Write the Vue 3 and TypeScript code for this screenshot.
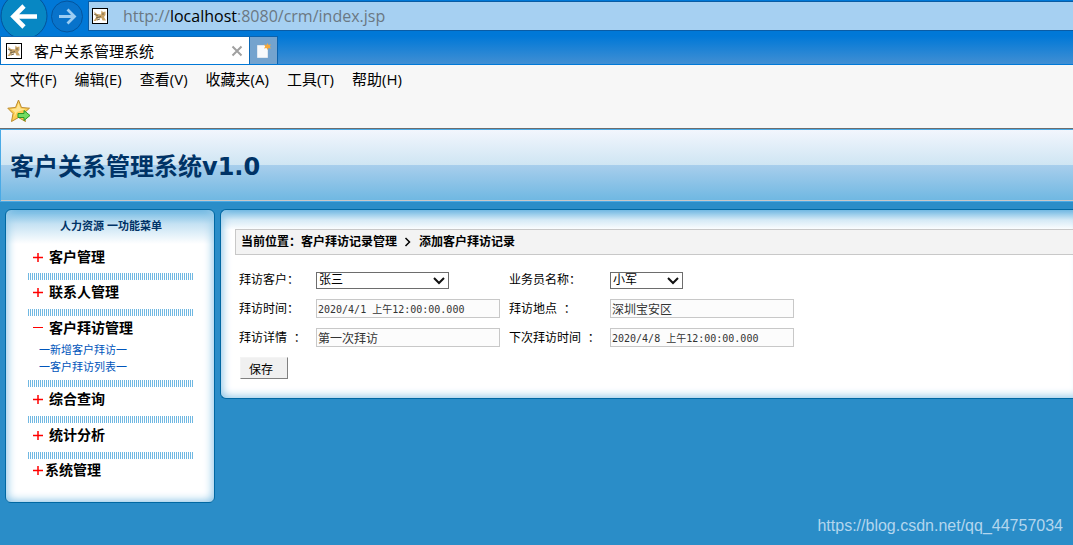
<script setup lang="ts">
import { ref } from 'vue'

interface MenuGroup {
  title: string
  open?: boolean
  tight?: boolean
  children?: string[]
}

const browserMenu: string[] = ['文件(F)', '编辑(E)', '查看(V)', '收藏夹(A)', '工具(T)', '帮助(H)']

const groups: MenuGroup[] = [
  { title: '客户管理' },
  { title: '联系人管理' },
  { title: '客户拜访管理', open: true, children: ['一新增客户拜访一', '一客户拜访列表一'] },
  { title: '综合查询' },
  { title: '统计分析' },
  { title: '系统管理', tight: true },
]

const customer = ref('张三')
const salesman = ref('小军')
const visitTime = ref('2020/4/1 上午12:00:00.000')
const place = ref('深圳宝安区')
const detail = ref('第一次拜访')
const nextTime = ref('2020/4/8 上午12:00:00.000')
</script>

<template>
  <div class="page">
    <header class="chrome">
      <div class="nav-row">
        <button class="nav-btn back" aria-label="后退">
          <svg width="48" height="36" viewBox="0 0 48 36">
            <circle cx="24" cy="16" r="23" fill="#0787c3" stroke="#04539a" stroke-width="1" />
            <path d="M14 16.500H37M24 6L13.500 16.500L24 27" fill="none" stroke="#fff" stroke-width="4.600" />
          </svg>
        </button>
        <button class="nav-btn forward" aria-label="前进">
          <svg width="34" height="36" viewBox="0 0 34 36">
            <circle cx="17" cy="16.500" r="15.500" fill="#0873cb" stroke="#04559f" stroke-width="1" />
            <path d="M9 16.500H24M17.500 9.500L24.500 16.500L17.500 23.500" fill="none" stroke="#9ccdf3" stroke-width="2.800" />
          </svg>
        </button>
        <div class="address">
          <svg class="favicon" width="16" height="16" viewBox="0 0 16 16">
            <rect x="0.500" y="0.500" width="15" height="15" fill="#fff" stroke="#000" />
            <path d="M2 3.500L5 6L9 6.500L9.500 2.500L11 4L13.500 3.500L13.500 7L12 9L14 12.500H10.500L9.500 10L6 10.500L4 13H1.500L4 9.500L3.500 7.500Z" fill="#c9a468" />
            <path d="M2 6L6 8M4 10L9 8.500M10 6H12M5 12L8 11" stroke="#75684e" stroke-width="1" />
          </svg>
          <span class="url">http://<b>localhost</b>:8080/crm/index.jsp</span>
        </div>
      </div>
      <div class="tab-row">
        <div class="tab">
          <svg class="favicon" width="16" height="16" viewBox="0 0 16 16">
            <rect x="0.500" y="0.500" width="15" height="15" fill="#fff" stroke="#000" />
            <path d="M2 3.500L5 6L9 6.500L9.500 2.500L11 4L13.500 3.500L13.500 7L12 9L14 12.500H10.500L9.500 10L6 10.500L4 13H1.500L4 9.500L3.500 7.500Z" fill="#c9a468" />
            <path d="M2 6L6 8M4 10L9 8.500M10 6H12M5 12L8 11" stroke="#75684e" stroke-width="1" />
          </svg>
          <span class="tab-title">客户关系管理系统</span>
          <button class="tab-close" aria-label="关闭标签页">
            <svg width="12" height="12" viewBox="0 0 12 12">
              <path d="M1.500 1.500L10.500 10.500M10.500 1.500L1.500 10.500" stroke="#a0a0a0" stroke-width="2" />
            </svg>
          </button>
        </div>
        <button class="new-tab" aria-label="新建标签页">
          <svg width="16" height="16" viewBox="0 0 16 16">
            <path d="M1.500 2.500H11.500V14.500H1.500Z" fill="#f8fafc" stroke="#e0e8f0" />
            <path d="M11.500 0L12.500 2L15 1.500L13.800 3.500L15 5.500L12.500 5L11.500 7L10.500 5L8 5.500L9.200 3.500L8 1.500L10.500 2Z" fill="#f5a93c" />
          </svg>
        </button>
      </div>
    </header>

    <nav class="menu-bar">
      <button v-for="m in browserMenu" :key="m">{{ m }}</button>
    </nav>
    <div class="favorites">
      <button aria-label="添加到收藏夹栏">
        <svg width="24" height="24" viewBox="0 0 24 24">
          <path d="M11.500 1L14.500 8.500L22.500 9.200L16.500 14.500L18.500 22.500L11.500 18.500L4.500 22.500L6 14.500L0.800 9.200L8.500 8.500Z" fill="#fbce50" stroke="#bd8a2c" />
          <path d="M11.500 4L13.500 9.500L19 10L10 13L7 18L8 13.500L4 10L9.500 9.500Z" fill="#ffe594" />
          <path d="M11 14.500H17V11.500L23 16.500L17 21.500V18.500H11Z" fill="#72dc62" stroke="#2b9628" />
        </svg>
      </button>
    </div>

    <div class="banner"><h1>客户关系管理系统v1.0</h1></div>

    <div class="body">
      <aside class="sidebar">
        <h2>人力资源 一功能菜单</h2>
        <ul class="groups">
          <li v-for="g in groups" :key="g.title">
            <a href="#" class="group" :class="{ tight: g.tight }">
              <svg width="10" height="10" viewBox="0 0 10 10">
                <path :d="g.open ? 'M0 4.500H10' : 'M0 5.500H10M5 1V10'" stroke="#f00" :stroke-width="g.open ? 1 : 1.5" />
              </svg>
              <span>{{ g.title }}</span>
            </a>
            <div v-if="g.children" class="children">
              <a v-for="c in g.children" :key="c" href="#">{{ c }}</a>
            </div>
          </li>
        </ul>
      </aside>

      <main class="panel">
        <div class="crumbs">
          <span>当前位置：客户拜访记录管理</span>
          <svg width="12" height="12" viewBox="0 0 12 12"><path d="M3.500 2L7.500 6L3.500 10" fill="none" stroke="#000" stroke-width="1.500" /></svg>
          <span>添加客户拜访记录</span>
        </div>
        <form class="form" @submit.prevent>
          <label for="customer">拜访客户：</label>
          <div class="select wide">
            <select id="customer" v-model="customer"><option>张三</option></select>
            <svg width="12" height="8" viewBox="0 0 12 8"><path d="M1 1L6 6L11 1" fill="none" stroke="#111" stroke-width="2" /></svg>
          </div>
          <label for="salesman">业务员名称：</label>
          <div class="select narrow">
            <select id="salesman" v-model="salesman"><option>小军</option></select>
            <svg width="12" height="8" viewBox="0 0 12 8"><path d="M1 1L6 6L11 1" fill="none" stroke="#111" stroke-width="2" /></svg>
          </div>

          <label for="visit-time">拜访时间：</label>
          <input id="visit-time" v-model="visitTime" class="date" type="text" />
          <label for="place">拜访地点&nbsp; ：</label>
          <input id="place" v-model="place" type="text" />

          <label for="detail">拜访详情&nbsp; ：</label>
          <input id="detail" v-model="detail" type="text" />
          <label for="next-time">下次拜访时间&nbsp; ：</label>
          <input id="next-time" v-model="nextTime" class="date" type="text" />

          <button class="save" type="submit">保存</button>
        </form>
      </main>
    </div>

    <footer>https://blog.csdn.net/qq_44757034</footer>
  </div>
</template>

<style>
body {
  margin: 0;
  background: #2a8dc8;
}
</style>

<style scoped>
.page {
  min-height: 100vh;
  display: flex;
  flex-direction: column;
  overflow-x: hidden;
  background: #2a8dc8;
  font-family: "Liberation Sans", "Noto Sans CJK SC", sans-serif;
  font-size: 12px;
  color: #000;
}
* {
  box-sizing: border-box;
}
button {
  margin: 0;
  padding: 0;
  border: 0;
  background: none;
  font: inherit;
  color: inherit;
}
svg {
  display: block;
  flex: none;
}
a {
  text-decoration: none;
}

.chrome {
  background: linear-gradient(#0078d7 36px, #418fd3 64px);
  border-bottom: 1px solid #0078d7;
  font-family: "Open Sans", "Noto Sans CJK SC", sans-serif;
}
.nav-row {
  display: flex;
  height: 36px;
}
.nav-btn.forward {
  margin: 0 4px 0 2px;
}
.address {
  flex: 1;
  height: 30px;
  margin-top: 1px;
  display: flex;
  align-items: center;
  gap: 15px;
  padding-left: 3px;
  background: #a6d0f2;
  border: 1px solid #0a5ca5;
  border-right: 0;
  font-size: 16px;
  color: #6b7883;
}
.url b {
  font-weight: 400;
  color: #000;
}
.tab-row {
  display: flex;
  height: 28px;
}
.tab {
  width: 250px;
  display: flex;
  align-items: center;
  padding: 0 6px 0 5px;
  background: #fff;
  border: 1px solid #0b69b7;
  border-bottom: 0;
}
.tab-title {
  flex: 1;
  margin-left: 12px;
  font-size: 15px;
  line-height: 26px;
}
.new-tab {
  width: 28px;
  display: flex;
  align-items: center;
  justify-content: center;
  background: #74a3ce;
  border: 1px solid #0b62ad;
  border-left: 0;
  border-bottom: 0;
}

.menu-bar {
  display: flex;
  gap: 18px;
  padding-left: 10px;
  background: #f7f7f7;
  font-family: "Open Sans", "Noto Sans CJK SC", sans-serif;
  font-size: 15px;
}
.menu-bar button {
  height: 28px;
  line-height: 26px;
}
.favorites {
  height: 36px;
  padding: 6px 7px;
  background: #f7f7f7;
  border-bottom: 1px solid #6d6d6d;
}

.banner {
  height: 73px;
  border: 1px solid #4aaae6;
  border-right: 0;
  padding-left: 9px;
  background: linear-gradient(#f2f6fd 0, #cfe5f3 35px, #a8ceec 35px, #70b8e2 70px, #c8c8c8 70px);
}
.banner h1 {
  margin: 0;
  font: bold 24px/75px "DejaVu Sans", "Noto Sans CJK SC", sans-serif;
  color: #036;
}

.body {
  display: flex;
  align-items: flex-start;
  gap: 5px;
  padding: 7px 0 0 5px;
}
.sidebar,
.panel {
  border: 1px solid #0068a3;
  background: linear-gradient(#70b8e2 0, #d5eaf6 10px, #fff 20px);
}
.sidebar {
  width: 210px;
  flex: none;
  border-radius: 6px;
  padding: 8px 20px 14px 22px;
  background: linear-gradient(#70b8e2 0, #c5e2f3 14px, #fff 34px);
  box-shadow: inset 8px 0 8px -6px #9accea, inset -8px 0 8px -6px #9accea, inset 0 -8px 8px -6px #9accea;
}
.sidebar h2 {
  margin: 0 0 12px;
  font-size: 11px;
  line-height: 16px;
  text-align: center;
  color: #036;
}
.groups {
  margin: 0;
  padding: 0;
  list-style: none;
}
.groups li + li::before {
  content: "";
  display: block;
  height: 7px;
  margin-right: 1px;
  background: repeating-linear-gradient(90deg, #70b8e2 0 1px, #fff 1px 2px);
}
.group {
  display: flex;
  align-items: center;
  gap: 6px;
  height: 29px;
  padding: 0 0 6px 5px;
  font-size: 14px;
  font-weight: bold;
  line-height: 24px;
  color: #000;
}
.groups li:first-child .group {
  height: 27px;
}
.group.tight {
  gap: 2px;
  padding-bottom: 8px;
}
.children {
  padding: 0 0 4px 11px;
  margin-top: -3px;
  font-size: 11px;
  line-height: 17px;
}
.children a {
  display: block;
  color: #05b;
}

.panel {
  flex: 1;
  min-width: 0;
  border-right: 0;
  border-radius: 6px 0 0 6px;
  padding: 19px 0 14px 14px;
  box-shadow: inset 8px 0 8px -6px #9accea, inset 0 -8px 8px -6px #9accea;
}
.crumbs {
  display: flex;
  align-items: center;
  gap: 5px;
  padding-left: 5px;
  border: 1px solid #c8c8c8;
  border-right: 0;
  background: #f3f3f3;
  font-weight: bold;
  line-height: 24px;
}
.form {
  display: grid;
  grid-template-columns: 77px 193px 101px 184px;
  grid-template-rows: 28px 29px 29px 32px;
  align-items: center;
  padding: 11px 0 0 4px;
}
.form label {
  line-height: 18px;
  white-space: nowrap;
}
.form input {
  width: 184px;
  height: 19px;
  padding: 0 1px;
  border: 1px solid #c8c8c8;
  background: #fcfcfc;
  color: #333;
  font: 12px "Liberation Sans", "Noto Sans CJK SC", sans-serif;
}
.form input.date {
  font: 10px "DejaVu Sans Mono", "Noto Sans CJK SC", monospace;
}
.select {
  position: relative;
}
.wide {
  width: 133px;
}
.narrow {
  width: 73px;
}
.select select {
  display: block;
  width: 100%;
  height: 17px;
  padding: 0 2px;
  appearance: none;
  border: 1px solid #6d6d6d;
  border-radius: 0;
  background: #fff;
  color: #000;
  font: 12px/15px "Liberation Sans", "Noto Sans CJK SC", sans-serif;
}
.select svg {
  position: absolute;
  right: 4px;
  top: 5px;
  pointer-events: none;
}
.save {
  width: 48px;
  height: 22px;
  margin-left: 1px;
  padding-right: 6px;
  background: #f0f0f0;
  border: 1px solid #f4f4f4;
  border-right-color: #808080;
  border-bottom-color: #808080;
}

footer {
  margin-top: auto;
  padding: 0 10px 9px 0;
  text-align: right;
  font: 16px/20px "Liberation Sans", sans-serif;
  color: #b3d6ee;
}
</style>
